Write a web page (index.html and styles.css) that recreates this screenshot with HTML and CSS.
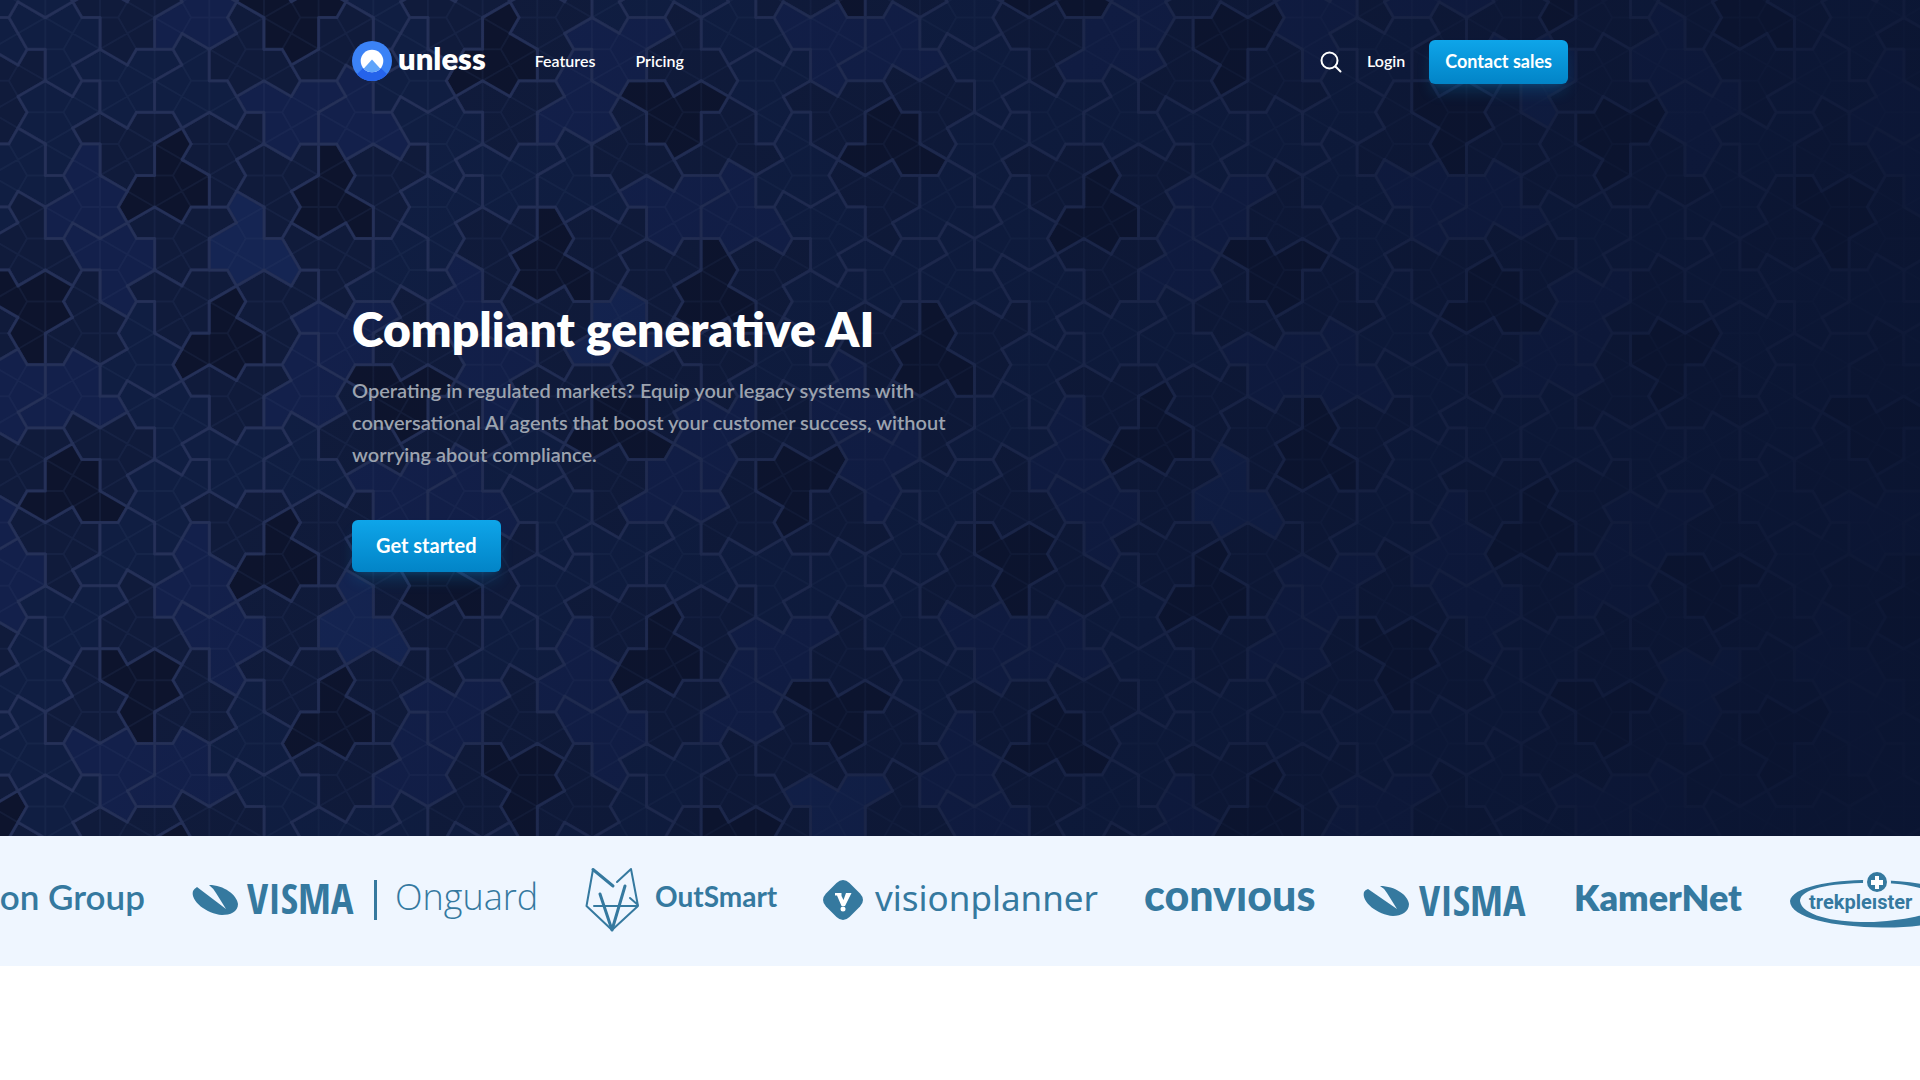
FILE: index.html
```html
<!DOCTYPE html>
<html lang="en">
<head>
<meta charset="utf-8">
<meta name="viewport" content="width=device-width, initial-scale=1">
<title>Unless – Compliant generative AI</title>
<link rel="stylesheet" href="styles.css">
<script src="tiling.js" defer></script>
</head>
<body>
<div class="hero">
  <svg class="hero-tiling" id="tiling" viewBox="0 0 1920 836" preserveAspectRatio="xMidYMin slice" aria-hidden="true"></svg>
  <div class="hero-fade"></div>

  <header class="header container">
    <a class="brand" href="#">
      <svg width="40" height="40" viewBox="0 0 40 40" aria-hidden="true">
        <defs>
          <clipPath id="outer"><circle cx="20" cy="20" r="20"/></clipPath>
          <clipPath id="inner"><circle cx="20" cy="20" r="11.3"/></clipPath>
        </defs>
        <circle cx="20" cy="20" r="20" fill="#3b82f6"/>
        <path clip-path="url(#outer)" fill="#2563eb" d="M20 18.5 42 40H-2Z"/>
        <circle cx="20" cy="20" r="11.3" fill="#fff"/>
        <path clip-path="url(#inner)" fill="#60a5fa" d="M20 18.5 34 34H6Z"/>
      </svg>
      <span class="brand-name">unless</span>
    </a>
    <nav class="nav">
      <a href="#">Features</a>
      <a href="#">Pricing</a>
    </nav>
    <div class="actions">
      <button class="search" type="button" aria-label="Search">
        <svg width="24" height="24" viewBox="0 0 24 24" fill="none" stroke="#fff" stroke-width="2" stroke-linecap="round" aria-hidden="true">
          <circle cx="10.500" cy="10.500" r="8"/><path d="m16.500 16.500 5 5"/>
        </svg>
      </button>
      <a class="login" href="#">Login</a>
      <button class="button" type="button">Contact sales</button>
    </div>
  </header>

  <main class="intro container">
    <h1>Compliant generative AI</h1>
    <p>Operating in regulated markets? Equip your legacy systems with conversational AI agents that boost your customer success, without worrying about compliance.</p>
    <button class="button button-large" type="button">Get started</button>
  </main>
</div>

<section class="logos" aria-label="Customers">
  <div class="logo-track">
    <svg class="logo" width="149" height="64" viewBox="0 0 149 64"><text class="t-group" x="150" y="42">on Group</text></svg>

    <svg class="logo" width="345" height="64" viewBox="0 0 345 64">
      <path d="M5 19 34 41 24 25Q21 20 17 17C32 17 45 27 46 36C46 44 38 47 30 47C15 46-2 33 1 23Q2 21 5 19Z"/>
      <text class="t-visma" x="55" y="46">VISMA</text>
      <rect x="182" y="12" width="3" height="40"/>
      <text class="t-onguard" x="203" y="42">Onguard</text>
    </svg>

    <svg class="logo" width="190" height="64" viewBox="0 0 190 64">
      <g class="fox">
        <path d="M46 1 53 38 27 62 1.500 38 8 1.500M46 1 32 14M9 38H53M45 30 53 37"/>
        <path class="fox-bold" d="m8 1.500 20 16.500M15 26 27 62 40 18"/>
      </g>
      <text class="t-outsmart" x="70" y="39">OutSmart</text>
    </svg>

    <svg class="logo" width="274" height="64" viewBox="0 0 274 64">
      <path d="M13.500 15Q20 9 26.500 15L37 25.500Q43 32 37 38.500L26.500 49Q20 55 13.500 49L3 38.500Q-3 32 3 25.500Z"/>
      <path class="cut" d="M12 25H18.500V28L20.500 32 23 25H28.500L22 38H18.500L14 27.500H12Z"/>
      <circle class="cut" cx="20" cy="41" r="2.500"/>
      <text class="t-vision" x="52" y="43">visionplanner</text>
    </svg>

    <svg class="logo" width="170" height="64" viewBox="0 0 170 64" role="img" aria-label="convious"><text class="t-convious" x="-1" y="43">convıous</text></svg>

    <svg class="logo" width="165" height="64" viewBox="0 0 165 64">
      <path d="M5 21 34 41 24 25Q21 20 17 18C32 18 45 27 46 36C46 44 38 48 30 48C15 47-2 34 1 24Q2 22 5 21Z"/>
      <text class="t-visma" x="56" y="48">VISMA</text>
    </svg>

    <svg class="logo" width="166" height="64" viewBox="0 0 166 64"><text class="t-kamernet" x="-2" y="43">KamerNet</text></svg>

    <svg class="logo" width="174" height="64" viewBox="0 0 174 64" role="img" aria-label="trekpleister">
      <path fill-rule="evenodd" d="M0 33C2 18 46 11 87 12C132 13 174 22 174 38C172 52 134 60 92 59.500C44 59 0 50 0 33ZM10 33C12 48 46 55 84 54C122 52 152 44 152 34C150 24 124 15 87 15C44 14 10 20 10 33Z"/>
      <circle class="cut-page" cx="87" cy="14" r="14"/>
      <circle cx="87" cy="14" r="10"/>
      <path class="cut" d="M85 8H89V12H93V17H89V21H85V17H81V12H85Z"/>
      <text class="t-trek" x="19" y="41">trekpleıster</text>
    </svg>
  </div>
</section>
</body>
</html>
```
FILE: styles.css
```css
* {
  box-sizing: border-box;
}

body {
  margin: 0;
  background: #fff;
  color: #fff;
  font-family: Lato, sans-serif;
}

a {
  color: inherit;
  text-decoration: none;
}

button {
  margin: 0;
  border: 0;
  font-family: inherit;
  cursor: pointer;
}

.container {
  max-width: 1280px;
  margin: 0 auto;
  padding: 0 32px;
}

/* Hero */

.hero {
  position: relative;
  overflow: hidden;
  background: #0a1430;
}

.hero-tiling,
.hero-fade {
  position: absolute;
  inset: 0;
  width: 100%;
  height: 100%;
}

.hero-fade {
  background: linear-gradient(115deg, rgba(10, 20, 48, 0) 20%, rgba(10, 20, 48, 0.9) 96%);
}

.tile {
  stroke: #222d54;
  stroke-width: 3;
  stroke-linejoin: round;
}

.tile-mirrored { fill: #0d142d; }
.tile-h { fill: #101b3b; }
.tile-f { fill: #101e42; }
.tile-p { fill: #13204b; }
.tile-t { fill: #152553; }

.kites {
  fill: none;
  stroke: #34406a;
  stroke-opacity: 0.2;
  stroke-width: 2;
}

.header {
  position: relative;
  display: flex;
  align-items: center;
  padding-top: 40px;
}

.brand {
  display: flex;
  align-items: center;
  gap: 6px;
  padding-bottom: 2px;
}

.brand-name {
  padding-bottom: 6px;
  font-size: 31px;
  line-height: 34px;
  font-weight: 800;
}

.nav {
  display: flex;
  gap: 40px;
  margin-left: 49px;
  padding-bottom: 2px;
  font-size: 16px;
  line-height: 24px;
  font-weight: 600;
}

.actions {
  display: flex;
  align-items: center;
  gap: 24px;
  margin-left: auto;
}

.search {
  display: flex;
  padding: 0;
  background: none;
}

.login {
  padding-bottom: 2px;
  font-size: 16px;
  line-height: 24px;
  font-weight: 600;
}

.button {
  padding: 7px 16px 9px;
  border-radius: 6px;
  background: linear-gradient(#0ea5e9, #0284c7);
  box-shadow: 0 10px 15px -3px rgba(14, 165, 233, 0.2), 0 4px 6px -4px rgba(14, 165, 233, 0.2);
  color: #fff;
  font-size: 18px;
  line-height: 28px;
  font-weight: 700;
}

.button-large {
  padding: 11px 24px 13px;
  font-size: 20px;
}

.intro {
  position: relative;
  padding-top: 216px;
  padding-bottom: 264px;
}

.intro h1 {
  margin: 0 0 16px;
  font-size: 48px;
  line-height: 58px;
  font-weight: 800;
}

.intro p {
  max-width: 608px;
  margin: 0 0 50px;
  color: #9ca3af;
  font-size: 20px;
  line-height: 32px;
  font-weight: 600;
}

/* Customer logos */

.logos {
  overflow: hidden;
  padding: 32px 0 34px;
  background: #eff6ff;
}

.logo-track {
  display: flex;
  gap: 48px;
  margin-left: -5px;
}

.logo {
  flex: none;
  overflow: visible;
  fill: #35799f;
}

.cut { fill: #fff; }
.cut-page { fill: #eff6ff; }

.fox {
  fill: none;
  stroke: #35799f;
  stroke-width: 2;
  stroke-linecap: round;
  stroke-linejoin: round;
}

.fox-bold { stroke-width: 3; }

.t-group { font-size: 35px; font-weight: 600; text-anchor: end; }
.t-visma { font-family: "Open Sans Condensed", "Open Sans", sans-serif; font-size: 42px; font-weight: 700; }
.t-onguard { font-family: "Open Sans", sans-serif; font-size: 36px; font-weight: 300; }
.t-outsmart { font-size: 28px; font-weight: 700; }
.t-vision { font-family: "Noto Sans", sans-serif; font-size: 35px; }
.t-convious { font-size: 43px; font-weight: 900; }
.t-kamernet { font-size: 36px; font-weight: 800; }
.t-trek { font-family: Roboto, sans-serif; font-size: 20px; font-weight: 700; }
```
FILE: tiling.js
```js
// Draws the hero background: an aperiodic "hat" monotile pattern,
// grown with the H/T/P/F metatile substitution rules.

const HALF_SQRT3 = Math.sqrt(3) / 2;
const HERO = { width: 1920, height: 836 };
const SCALE = 36.44;     // pixels per pattern unit
const LEVELS = 5;        // how many times the metatiles are substituted
const FOCUS = { x: 33.25, y: 124.70766, px: 168.3, py: 183.3, turn: 2 };

// Affine transforms are [a, b, tx, c, d, ty].
const IDENTITY = [1, 0, 0, 0, 1, 0];
const pt = (x, y) => ({ x, y });
const hexPt = (x, y) => pt(x + 0.5 * y, HALF_SQRT3 * y);
const add = (p, q) => pt(p.x + q.x, p.y + q.y);
const sub = (p, q) => pt(p.x - q.x, p.y - q.y);
const apply = (T, p) => pt(T[0] * p.x + T[1] * p.y + T[2], T[3] * p.x + T[4] * p.y + T[5]);
const translate = (x, y) => [1, 0, x, 0, 1, y];
const rotate = a => [Math.cos(a), -Math.sin(a), 0, Math.sin(a), Math.cos(a), 0];

function mul(A, B) {
  return [
    A[0] * B[0] + A[1] * B[3], A[0] * B[1] + A[1] * B[4], A[0] * B[2] + A[1] * B[5] + A[2],
    A[3] * B[0] + A[4] * B[3], A[3] * B[1] + A[4] * B[4], A[3] * B[2] + A[4] * B[5] + A[5],
  ];
}

function inverse(T) {
  const d = T[0] * T[4] - T[1] * T[3];
  return [
    T[4] / d, -T[1] / d, (T[1] * T[5] - T[2] * T[4]) / d,
    -T[3] / d, T[0] / d, (T[2] * T[3] - T[0] * T[5]) / d,
  ];
}

const rotateAbout = (p, a) => mul(translate(p.x, p.y), mul(rotate(a), translate(-p.x, -p.y)));
const segment = (p, q) => [q.x - p.x, p.y - q.y, p.x, q.y - p.y, q.x - p.x, p.y];
const match = (p1, q1, p2, q2) => mul(segment(p2, q2), inverse(segment(p1, q1)));

function intersect(p1, q1, p2, q2) {
  const d = (q2.y - p2.y) * (q1.x - p1.x) - (q2.x - p2.x) * (q1.y - p1.y);
  const u = ((q2.x - p2.x) * (p1.y - p2.y) - (q2.y - p2.y) * (p1.x - p2.x)) / d;
  return pt(p1.x + u * (q1.x - p1.x), p1.y + u * (q1.y - p1.y));
}

const HAT = [
  [0, 0], [-1, -1], [0, -2], [2, -2], [2, -1], [4, -2], [5, -1],
  [4, 0], [3, 0], [2, 2], [0, 3], [0, 2], [-1, 2],
].map(([x, y]) => hexPt(x, y));

// A metatile keeps its outline, its children and the radius that encloses them.
function metatile(outline, children) {
  let radius = 0;
  for (const { T, tile } of children) {
    const reach = typeof tile === 'string' ? 3 : tile.radius;
    radius = Math.max(radius, Math.hypot(T[2], T[5]) + reach);
  }
  return { outline, children, radius };
}

function baseTiles() {
  const h = HALF_SQRT3;
  const H = [pt(0, 0), pt(4, 0), pt(4.5, h), pt(2.5, 5 * h), pt(1.5, 5 * h), pt(-0.5, h)];
  const pair = tile => [
    { T: [0.5, 0, 1.5, 0, 0.5, h], tile },
    { T: mul(translate(0, 2 * h), mul([0.5, h, 0, -h, 0.5, 0], [0.5, 0, 0, 0, 0.5, 0])), tile },
  ];
  return {
    H: metatile(H, [
      { T: match(HAT[5], HAT[7], H[5], H[0]), tile: 'h' },
      { T: match(HAT[9], HAT[11], H[1], H[2]), tile: 'h' },
      { T: match(HAT[5], HAT[7], H[3], H[4]), tile: 'h' },
      { T: mul(translate(2.5, h), mul([-0.5, -h, 0, h, -0.5, 0], [0.5, 0, 0, 0, -0.5, 0])), tile: 'mirrored' },
    ]),
    T: metatile([pt(0, 0), pt(3, 0), pt(1.5, 3 * h)], [{ T: [0.5, 0, 0.5, 0, 0.5, h], tile: 't' }]),
    P: metatile([pt(0, 0), pt(4, 0), pt(3, 2 * h), pt(-1, 2 * h)], pair('p')),
    F: metatile([pt(0, 0), pt(3, 0), pt(3.5, h), pt(3, 2 * h), pt(-1, 2 * h)], pair('f')),
  };
}

// Each rule glues a new metatile to an edge of the patch built so far.
const RULES = [
  ['H'], [0, 0, 'P', 2], [1, 0, 'H', 2], [2, 0, 'P', 2], [3, 0, 'H', 2], [4, 4, 'P', 2],
  [0, 4, 'F', 3], [2, 4, 'F', 3], [4, 1, 3, 2, 'F', 0], [8, 3, 'H', 0], [9, 2, 'P', 0],
  [10, 2, 'H', 0], [11, 4, 'P', 2], [12, 0, 'H', 2], [13, 0, 'F', 3], [14, 2, 'F', 1],
  [15, 3, 'H', 4], [8, 2, 'F', 1], [17, 3, 'H', 0], [18, 2, 'P', 0], [19, 2, 'H', 2],
  [20, 4, 'F', 3], [20, 0, 'P', 2], [22, 0, 'H', 2], [23, 4, 'F', 3], [23, 0, 'F', 3],
  [16, 0, 'P', 2], [9, 4, 0, 2, 'T', 2], [4, 0, 'F', 3],
];

function substitute(tiles) {
  const patch = [];
  const corner = (i, j) => {
    const { T, tile } = patch[i];
    return apply(T, tile.outline[j % tile.outline.length]);
  };
  for (const rule of RULES) {
    if (rule.length === 1) {
      patch.push({ T: IDENTITY, tile: tiles[rule[0]] });
      continue;
    }
    const [name, edge] = rule.slice(-2);
    const from = rule.length === 4 ? corner(rule[0], rule[1] + 1) : corner(rule[2], rule[3]);
    const to = corner(rule[0], rule[1]);
    const tile = tiles[name];
    const next = tile.outline[(edge + 1) % tile.outline.length];
    patch.push({ T: match(tile.outline[edge], next, from, to), tile });
  }

  const a = corner(8, 2);
  const b = corner(21, 2);
  const c = corner(7, 2);
  const base = intersect(a, apply(rotateAbout(a, -2 * Math.PI / 3), b), corner(6, 2), c);
  const H = [base, a];
  let side = apply(rotate(-Math.PI / 3), sub(corner(6, 2), base));
  H.push(add(a, side), corner(14, 2));
  side = apply(rotate(-Math.PI / 3), side);
  H.push(sub(H[3], side), corner(6, 2));
  const apex = add(H[1], sub(H[4], H[5]));

  const pick = (outline, ids) => metatile(outline, ids.map(i => patch[i]));
  return {
    H: pick(H, [0, 9, 16, 27, 26, 6, 1, 8, 10, 15]),
    P: pick([c, add(c, sub(a, base)), a, base], [7, 2, 3, 4, 28]),
    F: pick([b, corner(24, 2), corner(25, 0), corner(25, 2), add(corner(25, 2), sub(base, a))],
      [21, 20, 22, 23, 24, 25]),
    T: pick([apex, apply(rotateAbout(apex, -Math.PI / 3), H[2]), H[2]], [11]),
  };
}

// Visits every hat that touches the hero and skips metatiles that are out of view.
function visit(meta, T, draw) {
  for (const child of meta.children) {
    const U = mul(T, child.T);
    const leaf = typeof child.tile === 'string';
    const reach = (leaf ? 3 : child.tile.radius) * SCALE;
    const hidden = U[2] < -reach || U[2] > HERO.width + reach || U[5] < -reach || U[5] > HERO.height + reach;
    if (hidden) continue;
    if (leaf) draw(child.tile, U);
    else visit(child.tile, U, draw);
  }
}

// The kite grid that underlies the hats: six spokes from every hexagon centre.
function kiteGrid(centre) {
  const dx = SCALE * 1.5;
  const dy = SCALE * HALF_SQRT3;
  const mod = (v, m) => ((v % m) + m) % m;
  const x0 = mod(centre.x, 2 * dx) - 2 * dx;
  const y0 = mod(centre.y, 2 * dy) - 2 * dy;
  let d = '';
  for (let i = 0; x0 + i * dx < HERO.width + dx; i++) {
    for (let y = y0 - (i % 2) * dy; y < HERO.height + dy; y += 2 * dy) {
      const cx = x0 + i * dx;
      for (let k = 0; k < 6; k++) {
        const at = angle => {
          const r = angle % 2 ? dy : SCALE;
          const t = angle * Math.PI / 6;
          return (cx + r * Math.cos(t)).toFixed(1) + ' ' + (y + r * Math.sin(t)).toFixed(1);
        };
        d += `M${cx.toFixed(1)} ${y.toFixed(1)}L${at(2 * k + 1)}`;
        if (k < 3) d += `M${at(2 * k)}L${at(2 * k + 2)}`;
      }
    }
  }
  return d;
}

let tiles = baseTiles();
for (let i = 0; i < LEVELS; i++) tiles = substitute(tiles);

const orient = mul([1, 0, 0, 0, -1, 0], rotate(-FOCUS.turn * Math.PI / 3));
const view = mul(translate(FOCUS.px, FOCUS.py),
  mul([SCALE, 0, 0, 0, SCALE, 0], mul(orient, translate(-FOCUS.x, -FOCUS.y))));

let polygons = '';
let centre = null;
visit(tiles.H, view, (kind, T) => {
  centre = centre || apply(T, HAT[0]);
  const points = HAT.map(p => {
    const q = apply(T, p);
    return q.x.toFixed(1) + ',' + q.y.toFixed(1);
  }).join(' ');
  polygons += `<polygon class="tile tile-${kind}" points="${points}"/>`;
});

document.getElementById('tiling').innerHTML = `${polygons}<path class="kites" d="${kiteGrid(centre)}"/>`;
```
